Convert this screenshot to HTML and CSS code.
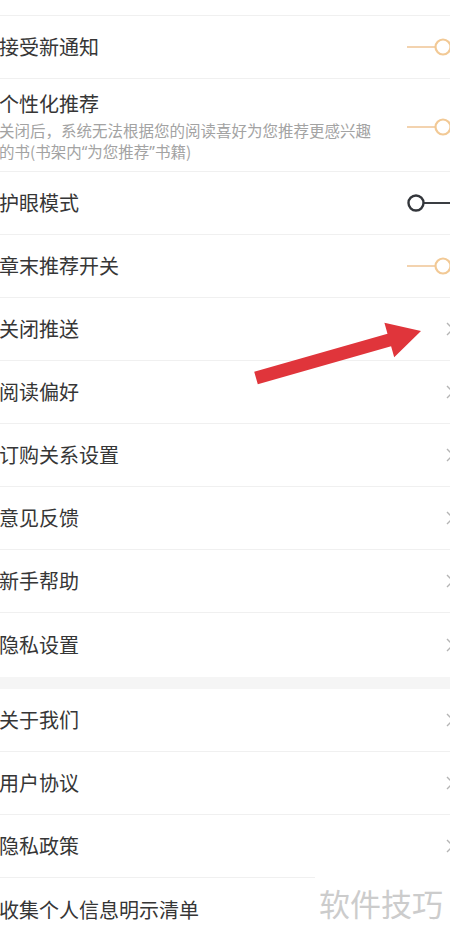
FILE: index.html
```html
<!DOCTYPE html>
<html lang="zh-CN">
<head>
<meta charset="utf-8">
<title>设置</title>
<link rel="stylesheet" href="styles.css">
</head>
<body>
<div class="screen">
  <div class="group">
    <div class="row stub"></div>
    <div class="row">
      <span class="title">接受新通知</span>
      <svg class="toggle" viewBox="0 0 43 20" width="43" height="20"><line x1="0" y1="10" x2="28" y2="10" class="on-line"/><circle cx="36" cy="10" r="7.5" class="on-knob"/></svg>
    </div>
    <div class="row tall">
      <div class="text">
        <div class="title">个性化推荐</div>
        <div class="desc">关闭后，系统无法根据您的阅读喜好为您推荐更感兴趣<br>的书(书架内<span class="q">“</span>为您推荐<span class="q">”</span>书籍)</div>
      </div>
      <svg class="toggle" viewBox="0 0 43 20" width="43" height="20"><line x1="0" y1="10" x2="28" y2="10" class="on-line"/><circle cx="36" cy="10" r="7.5" class="on-knob"/></svg>
    </div>
    <div class="row">
      <span class="title">护眼模式</span>
      <svg class="toggle" viewBox="0 0 43 20" width="43" height="20"><line x1="17" y1="10" x2="43" y2="10" class="off-line"/><circle cx="9" cy="10" r="7.5" class="off-knob"/></svg>
    </div>
    <div class="row">
      <span class="title">章末推荐开关</span>
      <svg class="toggle" viewBox="0 0 43 20" width="43" height="20"><line x1="0" y1="10" x2="28" y2="10" class="on-line"/><circle cx="36" cy="10" r="7.5" class="on-knob"/></svg>
    </div>
    <div class="row">
      <span class="title">关闭推送</span>
      <svg class="chev" viewBox="0 0 4 14" width="4" height="14"><polyline points="1,1 7,7 1,13"/></svg>
    </div>
    <div class="row">
      <span class="title">阅读偏好</span>
      <svg class="chev" viewBox="0 0 4 14" width="4" height="14"><polyline points="1,1 7,7 1,13"/></svg>
    </div>
    <div class="row">
      <span class="title">订购关系设置</span>
      <svg class="chev" viewBox="0 0 4 14" width="4" height="14"><polyline points="1,1 7,7 1,13"/></svg>
    </div>
    <div class="row">
      <span class="title">意见反馈</span>
      <svg class="chev" viewBox="0 0 4 14" width="4" height="14"><polyline points="1,1 7,7 1,13"/></svg>
    </div>
    <div class="row">
      <span class="title">新手帮助</span>
      <svg class="chev" viewBox="0 0 4 14" width="4" height="14"><polyline points="1,1 7,7 1,13"/></svg>
    </div>
    <div class="row last">
      <span class="title">隐私设置</span>
      <svg class="chev" viewBox="0 0 4 14" width="4" height="14"><polyline points="1,1 7,7 1,13"/></svg>
    </div>
  </div>
  <div class="band"></div>
  <div class="group">
    <div class="row">
      <span class="title">关于我们</span>
      <svg class="chev" viewBox="0 0 4 14" width="4" height="14"><polyline points="1,1 7,7 1,13"/></svg>
    </div>
    <div class="row">
      <span class="title">用户协议</span>
      <svg class="chev" viewBox="0 0 4 14" width="4" height="14"><polyline points="1,1 7,7 1,13"/></svg>
    </div>
    <div class="row">
      <span class="title">隐私政策</span>
      <svg class="chev" viewBox="0 0 4 14" width="4" height="14"><polyline points="1,1 7,7 1,13"/></svg>
    </div>
    <div class="row last">
      <span class="title">收集个人信息明示清单</span>
    </div>
  </div>

  <svg class="arrow" viewBox="250 318 175 70" width="175" height="70">
    <polygon points="254.2,371.8 387.5,333.75 384.4,322.7 421,331 394.2,357.3 391.1,346.25 257.8,384.3"/>
  </svg>
  <div class="watermark">软件技巧</div>
</div>
</body>
</html>
```

FILE: styles.css
```css
html, body {
  margin: 0;
  padding: 0;
  background: #ffffff;
}

.screen {
  position: relative;
  width: 450px;
  height: 938px;
  overflow: hidden;
  background: #ffffff;
  font-family: "Noto Sans CJK SC", "Noto Sans", sans-serif;
  color: #363636;
}

.group {
  display: flex;
  flex-direction: column;
}

.row {
  display: flex;
  align-items: center;
  justify-content: space-between;
  height: 62px;
  border-bottom: 1px solid #f0f0f0;
  padding-left: 0;
}

.row.stub {
  height: 15px;
}

.row.last {
  border-bottom: none;
  height: 64px;
}

.row.tall {
  height: auto;
  padding: 12px 0 8px 0;
}

.title {
  font-size: 20px;
  line-height: 26px;
  white-space: nowrap;
  margin-left: -1px;
}

.desc {
  font-size: 15.5px;
  line-height: 21px;
  color: #a3a3a3;
  margin-top: 3px;
  margin-left: -1px;
  white-space: nowrap;
}

.q {
  font-family: "Noto Sans", sans-serif;
}

.toggle {
  display: block;
  flex: none;
  overflow: hidden;
}

.on-line {
  stroke: #f2cfa6;
  stroke-width: 1.8;
}

.on-knob {
  fill: #ffffff;
  stroke: #f2c995;
  stroke-width: 2.2;
}

.off-line {
  stroke: #3a3d42;
  stroke-width: 2;
}

.off-knob {
  fill: #ffffff;
  stroke: #33363b;
  stroke-width: 2.4;
}

.chev {
  display: block;
  flex: none;
  overflow: hidden;
}

.chev polyline {
  fill: none;
  stroke: #b5b5b5;
  stroke-width: 1.4;
}

.band {
  height: 12px;
  background: #f5f5f5;
}

.arrow {
  position: absolute;
  left: 250px;
  top: 318px;
}

.arrow polygon {
  fill: #e0353b;
}

.watermark {
  position: absolute;
  left: 315px;
  top: 877px;
  width: 135px;
  height: 61px;
  background: #ffffff;
  color: #cccccc;
  font-size: 31px;
  line-height: 52px;
  padding-left: 4px;
  box-sizing: border-box;
  font-family: "Noto Sans CJK SC", sans-serif;
  letter-spacing: 0;
}
```
